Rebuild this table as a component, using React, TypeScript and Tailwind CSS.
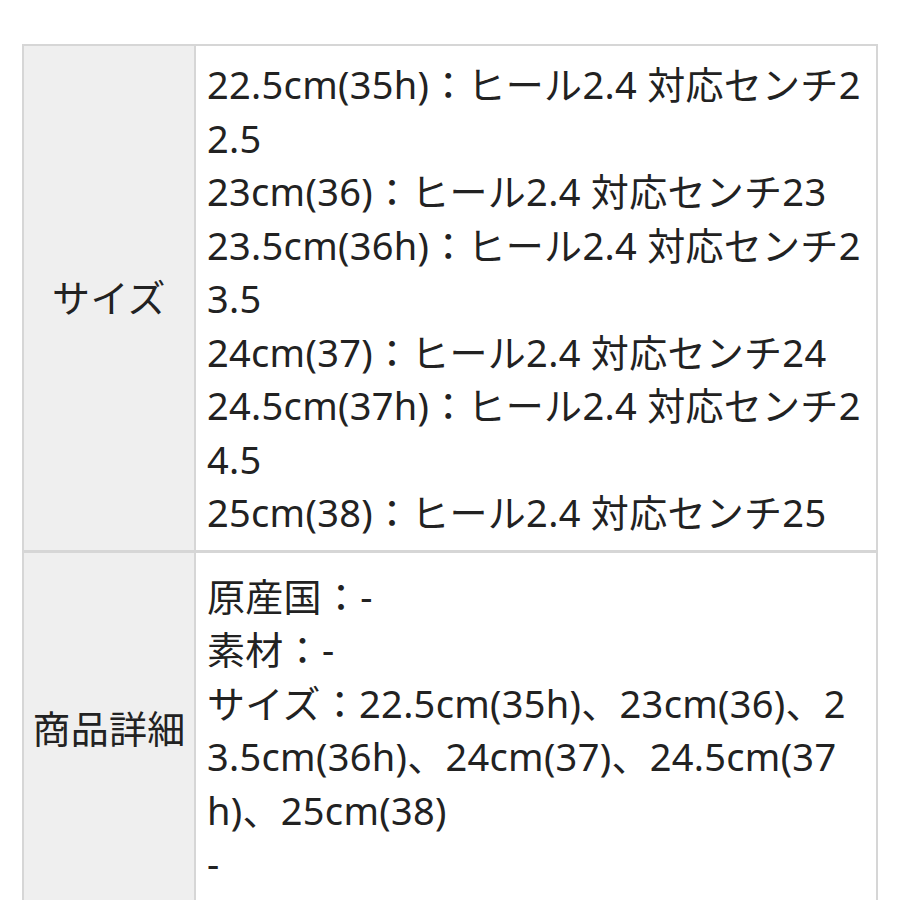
import React from "react";

const font = { fontFamily: '"Noto Sans", "Noto Sans CJK JP", sans-serif' };

const sizeLines = [
  "22.5cm(35h)：ヒール2.4 対応センチ22.5",
  "23cm(36)：ヒール2.4 対応センチ23",
  "23.5cm(36h)：ヒール2.4 対応センチ23.5",
  "24cm(37)：ヒール2.4 対応センチ24",
  "24.5cm(37h)：ヒール2.4 対応センチ24.5",
  "25cm(38)：ヒール2.4 対応センチ25",
];

const detailLines = [
  "原産国：-",
  "素材：-",
  "サイズ：22.5cm(35h)、23cm(36)、23.5cm(36h)、24cm(37)、24.5cm(37h)、25cm(38)",
  "-",
];

export default function App() {
  return (
    <div className="w-[900px] h-[900px] overflow-hidden bg-white" style={font}>
      <div className="pt-[44px] pl-[22px]">
        <div className="w-[856px] grid grid-cols-[172px_1fr] border-l-2 border-t-2 border-r-2 border-[#d6d6d6] text-[38px] leading-[53.5px] tracking-[0.3px] text-[#222222]">
          <div className="bg-[#efefef] border-r-2 border-b-[3px] border-[#d6d6d6] flex items-center justify-center">
            サイズ
          </div>
          <div className="border-b-[3px] border-[#d6d6d6] pl-[11px] pr-[8px] pt-[12px] pb-[10px] break-all">
            {sizeLines.map((l, i) => (
              <div key={i}>{l}</div>
            ))}
          </div>
          <div className="bg-[#efefef] border-r-2 border-b-2 border-[#d6d6d6] flex items-center justify-center">
            商品詳細
          </div>
          <div className="border-b-2 border-[#d6d6d6] pl-[11px] pr-[8px] pt-[17px] pb-[14px] break-all">
            {detailLines.map((l, i) => (
              <div key={i}>{l}</div>
            ))}
          </div>
        </div>
      </div>
    </div>
  );
}
